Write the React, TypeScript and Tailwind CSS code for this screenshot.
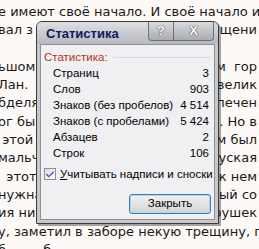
import { Check } from "lucide-react";

const docLines: { left: string; right: string }[] = [
    { left: "е имеют своё начало. И своё начало и", right: "" },
    { left: "вал з", right: "ущени" },
    { left: "", right: "" },
    { left: "ьшом", right: "м  гор" },
    { left: "Лан.", right: "велик" },
    { left: "бделя.", right: "печен" },
    { left: "ог бы", right: ". Но в" },
    { left: " этой", right: "м был" },
    { left: "мальч", right: "уская" },
    { left: "  этот", right: "к нем" },
    { left: "нужна", right: "ый со" },
    { left: "ия ни", right: "рушек" },
    { left: "у, заметил в заборе некую трещину, п", right: "" },
    { left: "б         б", right: "" },
];

const stats = [
    { label: "Страниц", value: "3" },
    { label: "Слов", value: "903" },
    { label: "Знаков (без пробелов)", value: "4 514" },
    { label: "Знаков (с пробелами)", value: "5 424" },
    { label: "Абзацев", value: "2" },
    { label: "Строк", value: "106" },
];

export default function App() {
    return (
        <div className="relative w-[259px] h-[249px] overflow-hidden bg-[#fdf9f7]">
            {/* Document text behind */}
            <div className="pt-[3px] text-[13px] leading-[18.3px] text-[#1a1a1a] font-['DejaVu_Sans',sans-serif]">
                {docLines.map((line, i) => (
                    <div key={i} className="flex justify-between h-[18.3px] whitespace-pre">
                        <span className="-ml-[2px]">{line.left}</span>
                        <span className="pr-[2px]">{line.right}</span>
                    </div>
                ))}
            </div>

            {/* Statistics dialog */}
            <div className="absolute left-[36px] top-[21px] w-[183px] h-[203px] flex flex-col border border-[#3c3c3c] rounded-t-[6px] bg-[#c6c8cc] shadow-[2px_2px_0_rgba(0,0,0,0.35)] font-['Liberation_Sans',Arial,sans-serif]">
                <div className="h-[22px] flex items-start justify-between rounded-t-[5px] bg-gradient-to-b from-[#dedfe2] to-[#b6b8bd]">
                    <span className="pl-[9px] pt-[4px] text-[13px] font-bold text-[#0c1a5c] leading-[16px]">Статистика</span>
                    <div className="flex mr-[4px]">
                        <div className="w-[26px] h-[19px] border border-[#6e7076] border-t-0 rounded-bl-[4px] bg-gradient-to-b from-[#d8dade] to-[#a9acb2] flex items-center justify-center text-[13px] font-bold text-white [text-shadow:0_0_1px_#333,0_0_1px_#333]">?</div>
                        <div className="w-[40px] h-[19px] border border-l-0 border-t-0 border-[#6e7076] rounded-br-[4px] bg-gradient-to-b from-[#d8dade] to-[#a9acb2] flex items-center justify-center text-[13px] font-bold text-white [text-shadow:0_0_1px_#333,0_0_1px_#333]">X</div>
                    </div>
                </div>
                <div className="flex-1 mx-[3px] mb-[3px] border border-[#8d9096] bg-[#f0f0f2] flex flex-col text-[11.5px] text-black">
                    <div className="flex items-center pl-[3px] pr-[3px] pt-[4px] h-[20px]">
                        <span className="text-[#b2341b] leading-[16px]">Статистика:</span>
                        <div className="flex-1 ml-[5px] h-px bg-[#d2dae2]" />
                    </div>
                    <div className="pl-[12px] pr-[5px]">
                        {stats.map((s) => (
                            <div key={s.label} className="flex justify-between h-[16px] leading-[16px]">
                                <span>{s.label}</span>
                                <span>{s.value}</span>
                            </div>
                        ))}
                    </div>
                    <div className="flex items-center mt-[5px] pl-[3px] h-[16px]">
                        <div className="w-[12px] h-[12px] border border-[#8f8f8f] bg-gradient-to-br from-[#dcdcdc] to-white flex items-center justify-center">
                            <Check className="w-[11px] h-[11px] text-[#4a4ab0]" strokeWidth={3} />
                        </div>
                        <span className="ml-[4px] leading-[16px]"><span className="underline">У</span>читывать надписи и сноски</span>
                    </div>
                    <div className="flex justify-end pr-[3px] mt-[12px]">
                        <button className="w-[82px] h-[20px] rounded-[3px] border border-[#3c7fb1] bg-gradient-to-b from-[#f2f2f2] to-[#d4d4d4] shadow-[inset_0_0_0_1px_#a9d7f4] text-[11.5px] text-black leading-none">Закрыть</button>
                    </div>
                </div>
            </div>
        </div>
    );
}
